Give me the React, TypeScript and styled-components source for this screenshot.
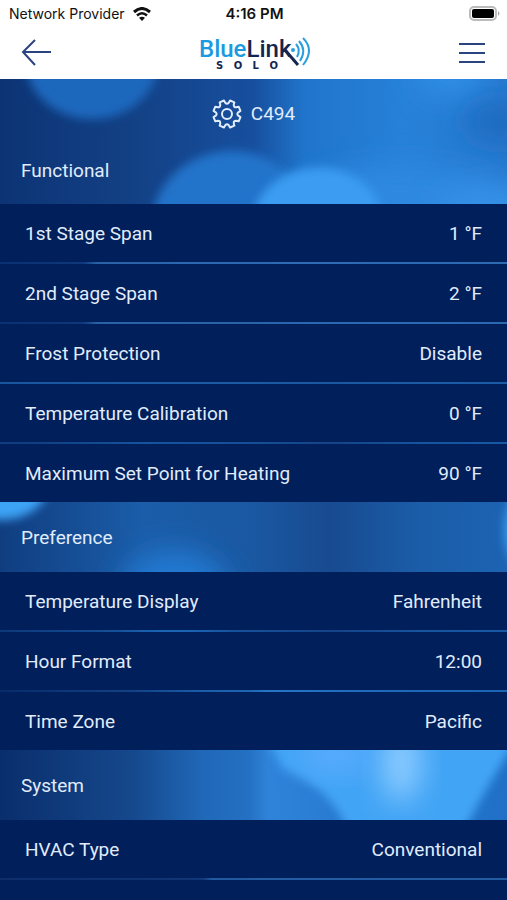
import React from "react";
import styled, { createGlobalStyle } from "styled-components";

const NAVY = "#001f5b";

const GlobalStyle = createGlobalStyle`
  *, *::before, *::after { box-sizing: border-box; }
  body {
    margin: 0;
    background: ${NAVY};
    font-family: Roboto, "Noto Sans", sans-serif;
  }
`;

const Screen = styled.div`
  display: flex;
  flex-direction: column;
  min-height: 100vh;
`;

const StatusBar = styled.div`
  display: grid;
  grid-template-columns: 1fr auto 1fr;
  align-items: center;
  height: 27px;
  padding: 0 7px 0 9px;
  background: #fff;
  color: #111;
  font-family: Inter, sans-serif;
  font-size: 14px;
`;

const Carrier = styled.div`
  display: flex;
  align-items: center;
  gap: 8px;
`;

const Clock = styled.time`
  font-size: 15px;
  font-weight: 600;
`;

const Battery = styled.svg`
  justify-self: end;
`;

const NavBar = styled.header`
  display: grid;
  grid-template-columns: 1fr auto 1fr;
  align-items: center;
  height: 52px;
  padding: 0 21px;
  background: #fff;
`;

const IconButton = styled.button<{ $end?: boolean }>`
  display: flex;
  justify-self: ${(p) => (p.$end ? "end" : "start")};
  padding: 0;
  border: 0;
  background: none;
  color: #2a4480;
  cursor: pointer;
`;

const Content = styled.main`
  position: relative;
  isolation: isolate;
  display: flex;
  flex: 1;
  flex-direction: column;
  overflow: hidden;
  background: #124a90;
  color: #e1ecfc;
`;

const Backdrop = styled.svg`
  position: absolute;
  inset: 0;
  z-index: -1;
  width: 100%;
  height: 100%;
`;

const DeviceTitle = styled.h1`
  display: flex;
  align-items: center;
  justify-content: center;
  gap: 9px;
  height: 69px;
  margin: 0;
  font-size: 19px;
  font-weight: 400;
`;

const SectionTitle = styled.h2<{ $first?: boolean }>`
  display: flex;
  align-items: center;
  height: ${(p) => (p.$first ? 56 : 70)}px;
  margin: 0;
  padding: 0 21px ${(p) => (p.$first ? 12 : 0)}px;
  font-size: 19px;
  font-weight: 400;
`;

const SettingList = styled.ul`
  display: flex;
  flex-direction: column;
  gap: 2px;
  margin: 0;
  padding: 0;
  list-style: none;
  background: rgba(0, 31, 91, 0.15);
`;

const SettingRow = styled.button`
  display: flex;
  align-items: center;
  justify-content: space-between;
  gap: 16px;
  width: 100%;
  height: 58px;
  padding: 0 25px;
  border: 0;
  background: ${NAVY};
  color: inherit;
  font: inherit;
  font-size: 19px;
  text-align: left;
  cursor: pointer;
`;

const Footer = styled.div`
  flex: 1;
  margin-top: 2px;
  background: ${NAVY};
`;

const sections = [
  {
    title: "Functional",
    rows: [
      ["1st Stage Span", "1 °F"],
      ["2nd Stage Span", "2 °F"],
      ["Frost Protection", "Disable"],
      ["Temperature Calibration", "0 °F"],
      ["Maximum Set Point for Heating", "90 °F"],
    ],
  },
  {
    title: "Preference",
    rows: [
      ["Temperature Display", "Fahrenheit"],
      ["Hour Format", "12:00"],
      ["Time Zone", "Pacific"],
    ],
  },
  { title: "System", rows: [["HVAC Type", "Conventional"]] },
];

const Logo = () => (
  <svg width="114" height="40" viewBox="196 33 114 40" role="img" aria-label="BlueLink Solo">
    <text x="198" y="57" fontFamily="Roboto, sans-serif" fontSize="24" fontWeight="500">
      <tspan fill="#1c9ae0">Blue</tspan>
      <tspan fill="#14254f">Link</tspan>
    </text>
    <path d="M284 50 L297 65" stroke="#14254f" strokeWidth="3" />
    <text x="215" y="69" fontFamily="DejaVu Sans, sans-serif" fontSize="10" fontWeight="700" fill="#14254f">
      {"S\u00a0\u00a0\u00a0O\u00a0\u00a0\u00a0L\u00a0\u00a0\u00a0O"}
    </text>
    <g fill="none" stroke="#2a9ede" strokeWidth="2">
      <circle cx="292" cy="50" r="2" fill="#2a9ede" stroke="none" />
      <path d="M295 44 Q300 50 296 57" />
      <path d="M298 41 Q306 50 299 61" />
      <path d="M302 38 Q314 50 302 65" />
    </g>
  </svg>
);

const gearPath = (() => {
  const teeth = 8;
  const parts: string[] = [];
  const at = (r: number, a: number) =>
    `${(15 + r * Math.cos(a)).toFixed(2)} ${(15 + r * Math.sin(a)).toFixed(2)}`;
  for (let i = 0; i < teeth; i++) {
    const a = ((i + 0.5) * 2 * Math.PI) / teeth;
    const valley = a + Math.PI / teeth;
    parts.push(
      `${i ? "L" : "M"}${at(11.4, a - 0.24)} L${at(13.8, a - 0.17)} L${at(13.8, a + 0.17)} L${at(11.4, a + 0.24)} Q${at(9.4, valley)} ${at(11.4, valley + Math.PI / teeth - 0.24)}`,
    );
  }
  return parts.join(" ") + "Z";
})();

const Gear = () => (
  <svg width="30" height="30" viewBox="0 0 30 30" fill="none" stroke="currentColor" strokeWidth="2" strokeLinejoin="round" aria-hidden="true">
    <path d={gearPath} />
    <circle cx="15" cy="15" r="5" />
  </svg>
);

const Bokeh = () => (
  <Backdrop viewBox="0 79 507 821" preserveAspectRatio="none" aria-hidden="true">
    <defs>
      <linearGradient id="top" x1="0" x2="1" y1="0" y2="0">
        <stop offset="0" stopColor="#0c3475" />
        <stop offset="0.25" stopColor="#134084" />
        <stop offset="0.5" stopColor="#174f9e" />
        <stop offset="0.6" stopColor="#2075cb" />
        <stop offset="0.8" stopColor="#2781d8" />
        <stop offset="1" stopColor="#2678ce" />
      </linearGradient>
      <linearGradient id="middle" x1="0" x2="1" y1="0" y2="0">
        <stop offset="0" stopColor="#103d80" />
        <stop offset="0.28" stopColor="#1b5da9" />
        <stop offset="0.5" stopColor="#1a58a2" />
        <stop offset="0.65" stopColor="#184a90" />
        <stop offset="0.83" stopColor="#1b5da9" />
        <stop offset="1" stopColor="#1c63b2" />
      </linearGradient>
      <linearGradient id="bottom" x1="0" x2="1" y1="0" y2="0">
        <stop offset="0" stopColor="#0a2e6c" />
        <stop offset="0.26" stopColor="#15488c" />
        <stop offset="0.4" stopColor="#2068b8" />
        <stop offset="0.49" stopColor="#2470c2" />
        <stop offset="0.53" stopColor="#2f84da" />
        <stop offset="0.7" stopColor="#2678ce" />
        <stop offset="1" stopColor="#1f70c6" />
      </linearGradient>
      <filter id="soft" x="-50%" y="-50%" width="200%" height="200%"><feGaussianBlur stdDeviation="5" /></filter>
      <filter id="hazy" x="-50%" y="-50%" width="200%" height="200%"><feGaussianBlur stdDeviation="14" /></filter>
    </defs>
    <rect x="0" y="79" width="507" height="270" fill="url(#top)" />
    <rect x="0" y="349" width="507" height="330" fill="url(#middle)" />
    <rect x="0" y="679" width="507" height="221" fill="url(#bottom)" />
    <ellipse cx="92" cy="62" rx="66" ry="57" fill="#1d68bd" filter="url(#soft)" />
    <ellipse cx="232" cy="225" rx="80" ry="74" fill="#2173ca" filter="url(#soft)" />
    <ellipse cx="400" cy="205" rx="110" ry="40" fill="#2d88e0" filter="url(#hazy)" />
    <ellipse cx="318" cy="222" rx="65" ry="54" fill="#3b9cf1" filter="url(#soft)" />
    <ellipse cx="450" cy="76" rx="34" ry="22" fill="#2f8de5" filter="url(#hazy)" />
    <ellipse cx="500" cy="122" rx="36" ry="18" fill="#1e6bc0" filter="url(#hazy)" />
    <ellipse cx="500" cy="225" rx="70" ry="40" fill="#3590e6" filter="url(#hazy)" />
    <rect x="90" y="258" width="440" height="70" fill="#3474bd" filter="url(#soft)" />
    <rect x="-20" y="376" width="560" height="12" fill="#2469b4" filter="url(#soft)" />
    <ellipse cx="2" cy="485" rx="46" ry="35" fill="#3ea3f5" filter="url(#soft)" />
    <ellipse cx="175" cy="595" rx="55" ry="45" fill="#2379d2" filter="url(#hazy)" />
    <ellipse cx="526" cy="530" rx="22" ry="40" fill="#3b97ea" filter="url(#soft)" />
    <path d="M266 735 H520 Q480 795 455 850 H352 Q345 795 282 768 Z" fill="#43a4f5" filter="url(#soft)" />
    <ellipse cx="401" cy="762" rx="20" ry="40" fill="#8acbff" filter="url(#hazy)" />
    <ellipse cx="335" cy="755" rx="36" ry="16" fill="#5cacff" filter="url(#hazy)" />
    <rect x="-20" y="874" width="230" height="16" fill="#0a2e6c" filter="url(#soft)" />
    <rect x="210" y="874" width="320" height="16" fill="#22569c" filter="url(#soft)" />
  </Backdrop>
);

export default function App() {
  return (
    <Screen>
      <GlobalStyle />
      <StatusBar>
        <Carrier>
          Network Provider
          <svg width="18" height="14" viewBox="0 0 18 14" fill="none" stroke="#111" strokeWidth="3" aria-hidden="true">
            <path d="M1 5 Q9 -2 17 5" />
            <path d="M4 8.500 Q9 4 14 8.500" strokeWidth="2.500" />
            <path d="M9 14 L6 10.800 Q9 8.600 12 10.800 Z" fill="#111" stroke="none" />
          </svg>
        </Carrier>
        <Clock>4:16 PM</Clock>
        <Battery width="31" height="15" viewBox="0 0 31 15" aria-label="Battery full" role="img">
          <rect x="1" y="1" width="26" height="13" rx="4" fill="#fff" stroke="#bbb" strokeWidth="2" />
          <rect x="3" y="3" width="22" height="9" rx="2" fill="#000" />
          <path d="M29 5 Q32 7.500 29 10Z" fill="#aaa" />
        </Battery>
      </StatusBar>
      <NavBar>
        <IconButton aria-label="Back">
          <svg width="32" height="28" viewBox="0 0 32 28" fill="none" stroke="currentColor" strokeWidth="2">
            <path d="M14 1 L2 13 L14 26 M2 13 H30" />
          </svg>
        </IconButton>
        <Logo />
        <IconButton $end aria-label="Menu">
          <svg width="28" height="22" viewBox="0 0 28 22" fill="none" stroke="currentColor" strokeWidth="2">
            <path d="M1 2 H27 M1 11 H27 M1 20 H27" />
          </svg>
        </IconButton>
      </NavBar>
      <Content>
        <Bokeh />
        <DeviceTitle>
          <Gear />
          C494
        </DeviceTitle>
        {sections.map((section, i) => (
          <React.Fragment key={section.title}>
            <SectionTitle $first={i === 0}>{section.title}</SectionTitle>
            <SettingList>
              {section.rows.map(([label, value]) => (
                <li key={label}>
                  <SettingRow>
                    <span>{label}</span>
                    <span>{value}</span>
                  </SettingRow>
                </li>
              ))}
            </SettingList>
          </React.Fragment>
        ))}
        <Footer />
      </Content>
    </Screen>
  );
}
